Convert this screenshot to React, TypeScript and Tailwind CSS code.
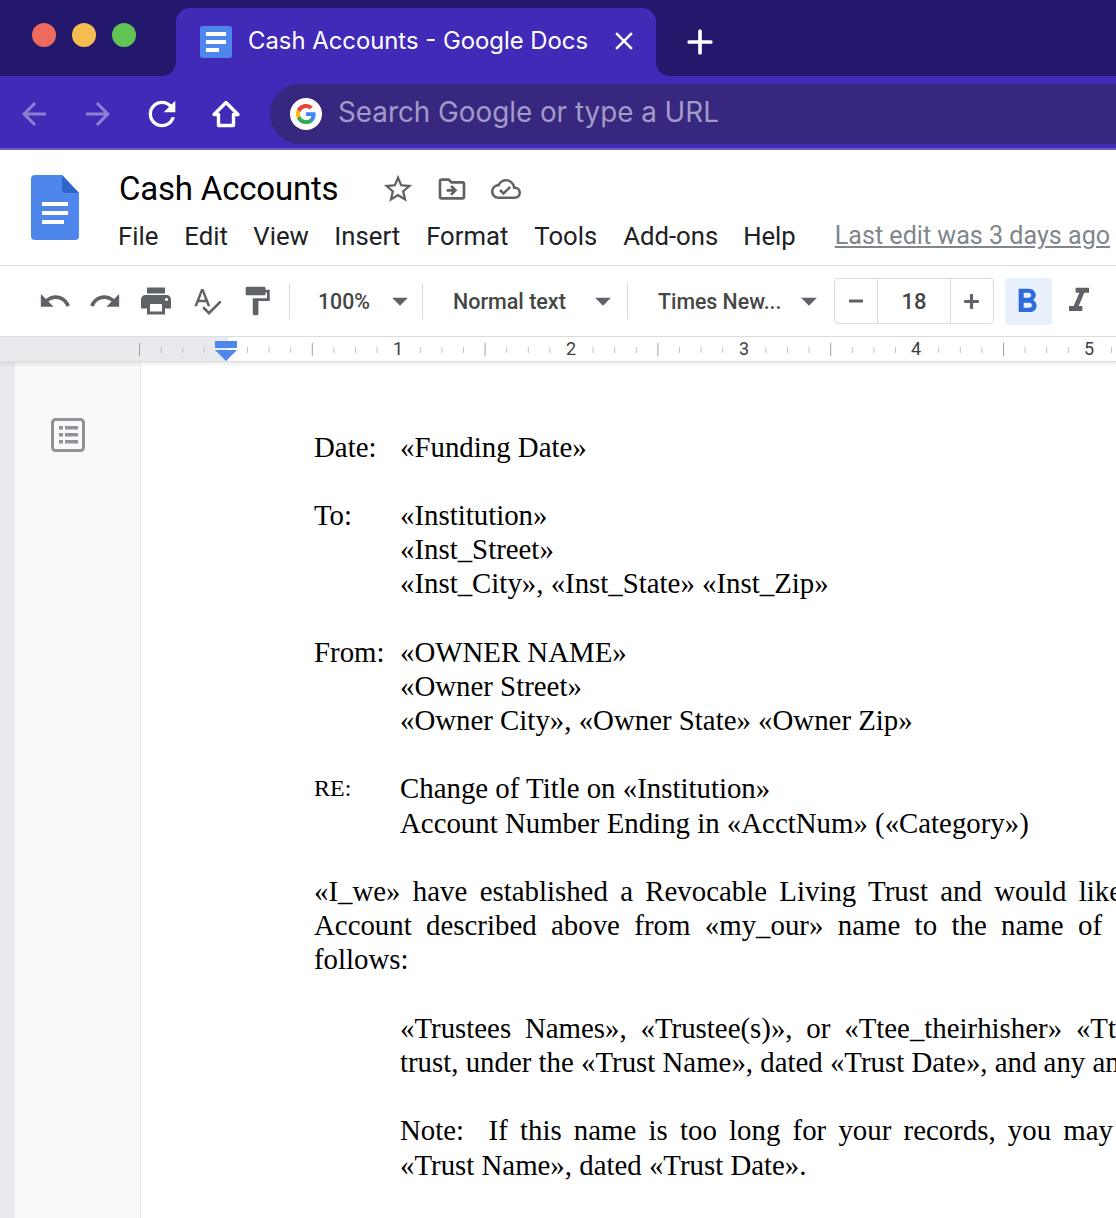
import { MdUndo, MdRedo, MdPrint, MdSpellcheck, MdFormatPaint, MdStarBorder, MdOutlineDriveFileMove, MdOutlineCloudDone, MdArrowBack, MdArrowForward, MdRefresh, MdClose, MdFormatItalic, MdFormatBold, MdArrowDropDown } from "react-icons/md";

const chromeFont = "font-['Inter',sans-serif]";
const roboto = "font-['Roboto',sans-serif]";

function DocsFavicon() {
  return (
    <svg width="32" height="32" viewBox="0 0 32 32">
      <rect width="32" height="32" rx="3" fill="#4f86ec" />
      <rect x="6" y="6" width="20" height="4" fill="#fff" />
      <rect x="6" y="14" width="20" height="4" fill="#fff" />
      <rect x="6" y="22" width="13" height="4" fill="#fff" />
    </svg>
  );
}

function GoogleLogo() {
  return (
    <svg width="32" height="32" viewBox="0 0 32 32">
      <circle cx="16" cy="16" r="16" fill="#fff" />
      <g transform="translate(5 5) scale(0.4583)">
        <path fill="#4285F4" d="M45.1 24.5c0-1.6-.1-3.1-.4-4.5H24v8.5h11.8c-.5 2.8-2 5.1-4.4 6.7v5.5h7.1c4.1-3.8 6.6-9.4 6.6-16.2z" />
        <path fill="#34A853" d="M24 46c5.9 0 10.9-2 14.5-5.3l-7.1-5.5c-2 1.3-4.5 2.1-7.4 2.1-5.7 0-10.6-3.9-12.3-9.1H4.4v5.7C8 41.1 15.4 46 24 46z" />
        <path fill="#FBBC05" d="M11.7 28.2c-.4-1.3-.7-2.7-.7-4.2s.3-2.9.7-4.2v-5.7H4.4C2.9 17.1 2 20.4 2 24s.9 6.9 2.4 9.9l7.3-5.7z" />
        <path fill="#EA4335" d="M24 10.8c3.2 0 6.1 1.1 8.4 3.3l6.3-6.3C34.9 4.2 29.9 2 24 2 15.4 2 8 6.9 4.4 14.1l7.3 5.7c1.7-5.2 6.6-9 12.3-9z" />
      </g>
    </svg>
  );
}

function DocsLogo() {
  return (
    <svg width="48" height="66" viewBox="0 0 48 66">
      <path d="M4 0H31L48 18V61a4 4 0 0 1-4 4H4a4 4 0 0 1-4-4V4a4 4 0 0 1 4-4z" fill="#4f86ec" />
      <path d="M31 0L48 18H35a4 4 0 0 1-4-4z" fill="#2f64c8" />
      <rect x="11" y="27" width="26" height="4" fill="#fff" />
      <rect x="11" y="36" width="26" height="4" fill="#fff" />
      <rect x="11" y="45" width="22" height="4" fill="#fff" />
    </svg>
  );
}

function HomeIcon() {
  return (
    <svg width="40" height="40" viewBox="0 0 40 40" fill="none" stroke="#fff" strokeWidth="3.4" strokeLinejoin="round">
      <path d="M8 20.5L20 8.5L32 20.5H27.5V31.5H12.5V20.5Z" />
    </svg>
  );
}

function PlusIcon({ size, stroke }: { size: number; stroke: number }) {
  return (
    <svg width={size} height={size} viewBox="0 0 24 24" fill="none" stroke="currentColor" strokeWidth={stroke} strokeLinecap="round">
      <path d="M12 2V22M2 12H22" />
    </svg>
  );
}

function MinusIcon() {
  return (
    <svg width="16" height="16" viewBox="0 0 16 16">
      <rect x="1" y="6.5" width="14" height="3" fill="currentColor" />
    </svg>
  );
}

function Ruler() {
  const ticks = [];
  for (let i = 0; i < 46; i++) {
    const x = 139.5 + i * 21.6;
    if (i % 8 === 4) continue;
    const major = i % 8 === 0;
    ticks.push(<line key={i} x1={x} x2={x} y1={major ? 6 : 10} y2={major ? 19 : 16} stroke={major ? "#9aa0a6" : "#bdc1c6"} />);
  }
  return (
    <div className="relative h-[26px] shrink-0 bg-white border-y border-[#dadce0] shadow-[0_2px_4px_rgba(60,64,67,0.12)] z-10">
      <div className="absolute left-0 top-0 h-full w-[228px] bg-[#e8eaed]" />
      <svg className="absolute left-0 top-0" width="1116" height="24">
        {ticks}
      </svg>
      {[1, 2, 3, 4, 5].map((n, i) => (
        <span key={n} className={`absolute top-[1px] text-[18px] leading-[22px] text-[#3c4043] ${roboto} ${["left-[393px]", "left-[566px]", "left-[739px]", "left-[911px]", "left-[1084px]"][i]}`}>
          {n}
        </span>
      ))}
      <svg className="absolute left-[215px] top-[4px]" width="23" height="21" viewBox="0 0 23 21">
        <rect width="22" height="7" fill="#4f86ec" />
        <path d="M0 9H22L11 20z" fill="#4f86ec" />
      </svg>
    </div>
  );
}

function Divider() {
  return <div className="w-px h-[36px] bg-[#dadce0]" />;
}

function Row({ label, children, small }: { label?: string; children?: React.ReactNode; small?: boolean }) {
  return (
    <div className="flex h-[34.2px]">
      <span className={`w-[86px] shrink-0 ${small ? "text-[24px]" : ""}`}>{label}</span>
      <span className="whitespace-nowrap">{children}</span>
    </div>
  );
}

// stretched like the justified lines of the page, the right part runs out of the window
function Just({ w, children, ml }: { w: string; children: React.ReactNode; ml?: boolean }) {
  return <div className={`h-[34.2px] whitespace-normal text-justify [text-align-last:justify] ${w} ${ml ? "ml-[86px]" : ""}`}>{children}</div>;
}

export default function App() {
  return (
    <div className="w-[1116px] h-[1218px] overflow-hidden flex flex-col bg-white">
      {/* tab strip */}
      <div className={`h-[76px] shrink-0 flex bg-[#412ab8] ${chromeFont}`}>
        <div className="w-[176px] bg-[#24186c] rounded-br-[14px] flex items-start gap-[16px] pl-[32px] pt-[23px]">
          <div className="w-[24px] h-[24px] rounded-full bg-[#ee6a5f]" />
          <div className="w-[24px] h-[24px] rounded-full bg-[#f5bd4f]" />
          <div className="w-[24px] h-[24px] rounded-full bg-[#61c454]" />
        </div>
        <div className="w-[480px] bg-[linear-gradient(#24186c_50%,#412ab8_50%)]">
          <div className="h-[68px] mt-[8px] bg-[#412ab8] rounded-t-[14px] flex items-center pl-[24px] text-white">
            <DocsFavicon />
            <span className="ml-[16px] mb-[2px] text-[23.85px] whitespace-nowrap">Cash Accounts - Google Docs</span>
            <MdClose className="ml-[21px] mb-[2px] text-[30px]" />
          </div>
        </div>
        <div className="flex-1 bg-[#24186c] rounded-bl-[14px] flex items-center pl-[31px] pt-[8px] text-white">
          <PlusIcon size={26} stroke={3.4} />
        </div>
      </div>
      {/* address bar */}
      <div className="h-[74px] shrink-0 bg-[#412ab8] border-b-2 border-[#7060c4] flex items-start pt-[8px] pl-[16px]">
        <div className="flex items-center h-[60px] gap-[24px] text-white">
          <MdArrowBack className="text-[36px] opacity-40" />
          <MdArrowForward className="text-[36px] opacity-40 ml-[4px]" />
          <MdRefresh className="text-[40px] ml-[2px]" />
          <HomeIcon />
        </div>
        <div className={`ml-[24px] flex-1 h-[60px] rounded-l-[30px] bg-[#38277f] flex items-center pl-[20px] ${chromeFont}`}>
          <GoogleLogo />
          <span className="ml-[16px] mb-[2px] text-[27.8px] text-[#a29ac8] whitespace-nowrap">Search Google or type a URL</span>
        </div>
      </div>
      {/* docs header */}
      <div className={`h-[116px] shrink-0 border-b border-[#dadce0] flex pl-[31px] ${roboto}`}>
        <div className="pt-[25px]">
          <DocsLogo />
        </div>
        <div className="ml-[39px] pt-[18px]">
          <div className="flex items-center h-[42px] pl-[1px]">
            <span className="text-[33px] text-black tracking-[-0.2px] whitespace-nowrap">Cash Accounts</span>
            <div className="flex items-center ml-[43px] text-[#5f6368]">
              <MdStarBorder className="text-[34px]" />
              <MdOutlineDriveFileMove className="text-[32px] ml-[21px]" />
              <MdOutlineCloudDone className="text-[30px] ml-[23px]" />
            </div>
          </div>
          <div className="flex items-center h-[36px] mt-[8px] text-[25.7px] text-[#202124]">
            <span>File</span>
            <span className="ml-[26px]">Edit</span>
            <span className="ml-[25.5px]">View</span>
            <span className="ml-[25.5px]">Insert</span>
            <span className="ml-[26px]">Format</span>
            <span className="ml-[26px]">Tools</span>
            <span className="ml-[26px]">Add-ons</span>
            <span className="ml-[25px]">Help</span>
            <span className="ml-[39px] text-[25.1px] text-[#80868b] underline whitespace-nowrap">Last edit was 3 days ago</span>
          </div>
        </div>
      </div>
      {/* toolbar */}
      <div className={`h-[70px] shrink-0 flex items-center pl-[38px] text-[#5f6368] whitespace-nowrap ${roboto}`}>
        <MdUndo className="text-[34px]" />
        <MdRedo className="text-[34px] ml-[16px]" />
        <MdPrint className="text-[36px] ml-[16px]" />
        <MdSpellcheck className="text-[32px] ml-[17px]" />
        <MdFormatPaint className="text-[34px] ml-[17px]" />
        <div className="ml-[15px]"><Divider /></div>
        <span className="ml-[28px] mt-[2px] w-[52px] text-[21.3px] font-medium text-[#444746]">100%</span>
        <MdArrowDropDown className="text-[38px] ml-[11px]" />
        <div className="ml-[3px]"><Divider /></div>
        <span className="ml-[30px] mt-[2px] w-[113px] text-[21.5px] font-medium text-[#444746]">Normal text</span>
        <MdArrowDropDown className="text-[38px] ml-[18px]" />
        <div className="ml-[5px]"><Divider /></div>
        <span className="ml-[30px] mt-[2px] w-[123px] text-[21.3px] font-medium text-[#444746]">Times New...</span>
        <MdArrowDropDown className="text-[38px] ml-[9px]" />
        <div className="ml-[6px] h-[46px] w-[160px] rounded-[4px] border border-[#dadce0] flex items-center">
          <div className="w-[43px] h-full flex items-center justify-center border-r border-[#dadce0]"><MinusIcon /></div>
          <div className="w-[73px] h-full flex items-center justify-center border-r border-[#dadce0] text-[22px] font-medium text-[#444746]">18</div>
          <div className="flex-1 h-full flex items-center justify-center pr-[1px]"><PlusIcon size={15} stroke={5} /></div>
        </div>
        <div className="ml-[11px] mt-[1px] w-[47px] h-[47px] rounded-[4px] bg-[#e8f0fe] flex items-center justify-center pr-[3px] text-[#2f6bdb]">
          <MdFormatBold className="text-[40px]" />
        </div>
        <MdFormatItalic className="text-[40px] ml-[7px]" />
      </div>
      <Ruler />
      {/* page area */}
      <div className="flex-1 flex min-h-0">
        <div className="w-[15px] shrink-0 bg-[#e8eaed]" />
        <div className="w-[126px] shrink-0 bg-[#f8f9fa] border-r border-[#e8eaed] pl-[36px] pt-[56px]">
          <svg width="34" height="34" viewBox="0 0 34 34" fill="none">
            <rect x="1.5" y="1.5" width="31" height="31" rx="3" stroke="#8f9296" strokeWidth="3" />
            <rect x="8" y="8" width="4" height="3.5" fill="#8f9296" />
            <rect x="14" y="8" width="13" height="3.5" fill="#8f9296" />
            <rect x="8" y="15" width="4" height="3.5" fill="#8f9296" />
            <rect x="14" y="15" width="13" height="3.5" fill="#8f9296" />
            <rect x="8" y="22" width="4" height="3.5" fill="#8f9296" />
            <rect x="14" y="22" width="13" height="3.5" fill="#8f9296" />
          </svg>
        </div>
        <div className="flex-1 min-w-0 overflow-hidden pl-[173px] pt-[67.6px] font-['Liberation_Serif',serif] text-[28.85px] leading-[34.2px] text-black">
          <Row label="Date:">«Funding Date»</Row>
          <Row />
          <Row label="To:">«Institution»</Row>
          <Row>«Inst_Street»</Row>
          <Row>«Inst_City», «Inst_State» «Inst_Zip»</Row>
          <Row />
          <Row label="From:">«OWNER NAME»</Row>
          <Row>«Owner Street»</Row>
          <Row>«Owner City», «Owner State» «Owner Zip»</Row>
          <Row />
          <Row label="RE:" small>Change of Title on «Institution»</Row>
          <Row>Account Number Ending in «AcctNum» («Category»)</Row>
          <Row />
          <Just w="w-[808px]">«I_we» have established a Revocable Living Trust and would like</Just>
          <Just w="w-[788px]">Account described above from «my_our» name to the name of</Just>
          <div className="h-[34.2px]">follows:</div>
          <Row />
          <Just w="w-[716px]" ml>«Trustees Names», «Trustee(s)», or «Ttee_theirhisher» «Tt</Just>
          <div className="ml-[86px] h-[34.2px] whitespace-nowrap">trust, under the «Trust Name», dated «Trust Date», and any an</div>
          <Row />
          <Just w="w-[713px]" ml>Note:{"\u00a0"} If this name is too long for your records, you may</Just>
          <Row>«Trust Name», dated «Trust Date».</Row>
        </div>
      </div>
    </div>
  );
}
